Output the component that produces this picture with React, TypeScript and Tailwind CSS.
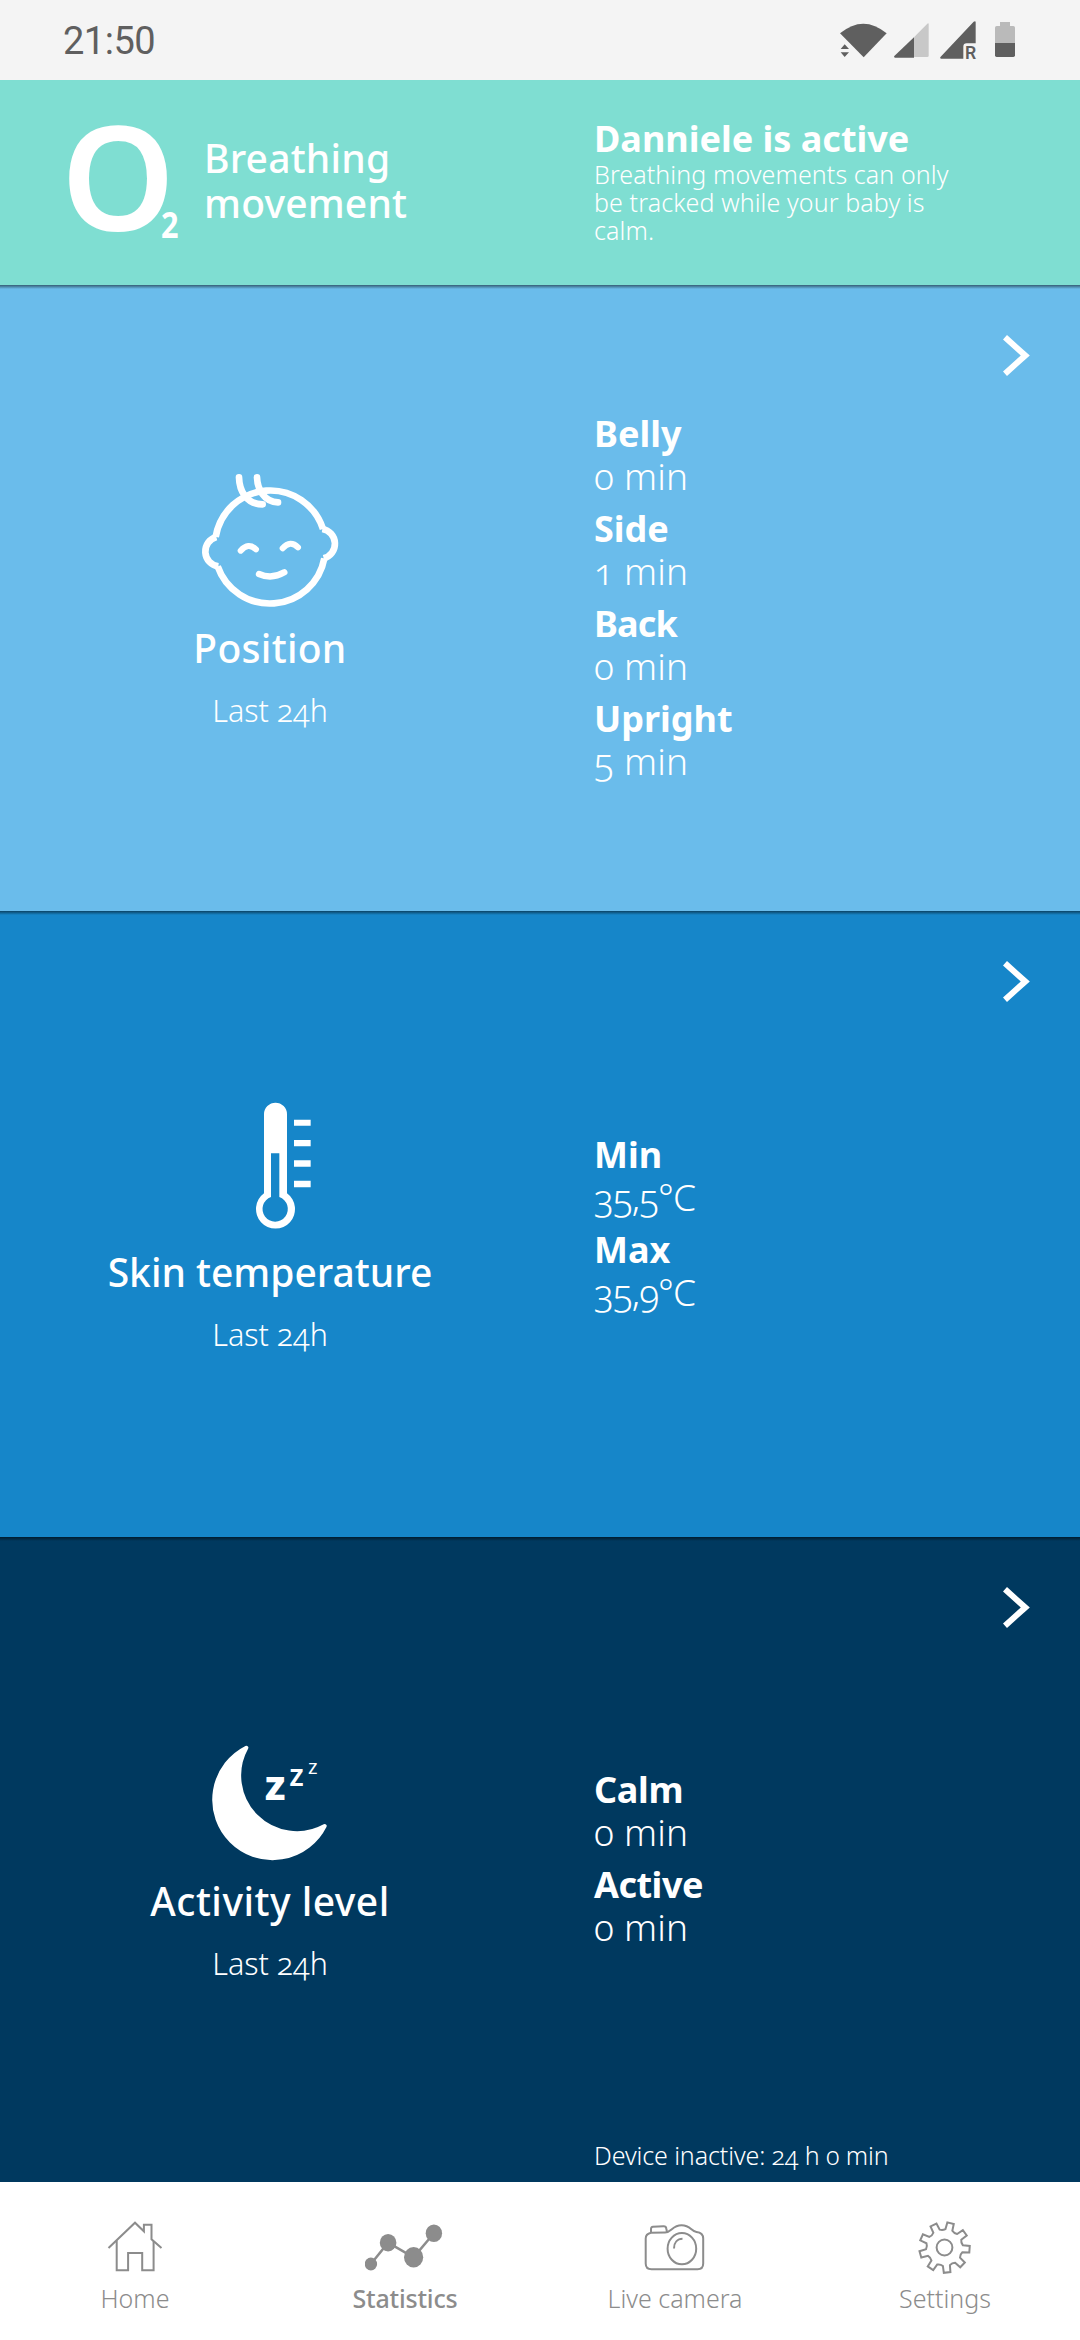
import React from "react";
import clsx from "clsx";

type Stat = { label: string; value: string; labelClass?: string; valueClass?: string };

const positionStats: Stat[] = [
	{ label: "Belly", value: "0 min" },
	{ label: "Side", value: "1 min" },
	{ label: "Back", value: "0 min", labelClass: "tracking-[-0.9px]" },
	{ label: "Upright", value: "5 min" },
];

const temperatureStats: Stat[] = [
	{ label: "Min", value: "35,5°C", valueClass: "tracking-[-1px]" },
	{ label: "Max", value: "35,9°C", valueClass: "tracking-[-1px]" },
];

const activityStats: Stat[] = [
	{ label: "Calm", value: "0 min", labelClass: "tracking-[-0.3px]" },
	{ label: "Active", value: "0 min", labelClass: "tracking-[-0.5px]" },
];

const StatusIcons = () => (
	<svg width="220" height="80" viewBox="0 0 660 240" fill="#5f5f5f">
		<path d="M60 100Q130 42 200 100L131 172Z" />
		<path d="M62 147h25L74 133ZM62 157h25L74 171Z" />
		<path d="M282 112L322 71Q326 67 326 73V167Q326 171 322 171H282Z" fill="#c8c8c8" />
		<path d="M282 112V173H225Q220 172 223 168Z" />
		<path d="M467 67V130H440Q430 130 430 140V176H364Q358 175 362 170L461 65Q467 61 467 67Z" />
		<text x="435" y="177" fontSize="53" fontWeight="600" fontFamily="Roboto, sans-serif">R</text>
		<path d="M540 66h30v12h10q5 0 5 5v47h-60V83q0-5 5-5h10Z" fill="#bababa" />
		<path d="M525 129h60v37q0 5-5 5h-50q-5 0-5-5Z" />
	</svg>
);

const BabyIcon = () => (
	<svg width="160" height="142" viewBox="120 86 480 426" fill="none" stroke="white" strokeWidth="20">
		<path d="M197 290A166 166 0 0 1 519 266" />
		<path d="M523 354A166 166 0 0 1 203 378" />
		<path d="M199 290A45 45 0 0 0 205 378" />
		<path d="M517 266A45 45 0 0 1 521 354" />
		<g strokeLinecap="round">
			<path d="M267 111C268 150 288 192 338 192" />
			<path d="M321 111C322 145 342 185 384 186" />
			<path d="M272 331Q295 305 318 327" strokeWidth="18" />
			<path d="M398 324Q421 298 444 321" strokeWidth="18" />
			<path d="M327 401Q365 418 403 396" strokeWidth="19" />
		</g>
	</svg>
);

const ThermometerIcon = () => (
	<svg width="160" height="138" viewBox="330 49 480 414" fill="white">
		<path d="M552 100.500A34.500 34.500 0 0 1 621 100.500V338A58.500 58.500 0 1 1 552 338Z" />
		<path d="M573 218H598V349A38 38 0 1 1 573 349Z" fill="#1686c9" />
		<path d="M642 117h50v18h-50ZM642 178h50v19h-50ZM642 239h50v19h-50ZM642 300h50v20h-50Z" />
	</svg>
);

const MoonIcon = () => (
	<svg width="160" height="125" viewBox="210 56 480 375" fill="white" fontFamily="Noto Sans, sans-serif">
		<path
			d="M379 82A175 175 0 1 0 614 317A173 173 0 0 1 379 82Z"
			stroke="white"
			strokeWidth="12"
			strokeLinejoin="round"
		/>
		<text x="434" y="240" fontSize="125" fontWeight="800">z</text>
		<text x="508" y="198" fontSize="90" fontWeight="600">z</text>
		<text x="564" y="162" fontSize="61" fontWeight="400">z</text>
	</svg>
);

const Chevron = () => (
	<svg width="27" height="41" viewBox="1328 44 81 123" className="absolute top-[50px] right-[50px]">
		<path d="M1334 51L1395 105.500L1334 160" fill="none" stroke="white" strokeWidth="18" />
	</svg>
);

const HomeIcon = () => (
	<svg width="80" height="60" fill="none" stroke="#8c8c8c" strokeWidth="2">
		<path d="M13.500 30L40 4.700L48.900 13.300V6.700H56.500V21.200L66.500 30" />
		<path d="M21.700 22.500V52.300H33.100V35H47.200V52.300H58.600V23" />
	</svg>
);

const StatisticsIcon = () => (
	<svg width="80" height="60" fill="#8c8c8c">
		<path d="M5.900 46L23.100 24.700L48.600 39.300L68.900 15.300" fill="none" stroke="#8c8c8c" strokeWidth="2.500" />
		<ellipse cx="5.900" cy="46" rx="6.200" ry="6.500" />
		<ellipse cx="23.100" cy="24.700" rx="8.300" ry="8.700" />
		<ellipse cx="48.600" cy="39.300" rx="9.600" ry="10.300" />
		<ellipse cx="68.900" cy="15.300" rx="8.200" ry="8.800" />
	</svg>
);

const CameraIcon = () => (
	<svg width="80" height="60" fill="none" stroke="#8c8c8c" strokeWidth="2">
		<path d="M16 14.800L30 14.500C37 14.500 37 7.300 46.500 7.300C56 7.300 55.500 13.300 61.500 14C65.500 14.500 68.200 16.500 68.200 20.500V45.500Q68.200 51.300 62.500 51.300H16.500Q10.700 51.300 10.700 45.500V20.500Q10.700 16 16 14.800Z" />
		<path d="M16 14.800V11Q16 9 18 8.800L28.500 8.300Q31 8.200 31.300 10.500L32 14" />
		<ellipse cx="46.900" cy="30.700" rx="14.300" ry="15.600" />
		<path d="M39 30.500C39 24.500 42.500 20.800 47.500 20.800" />
	</svg>
);

// Nine teeth, 40 degrees apart
const gearPath = () => {
	const point = (radius: number, degrees: number) => {
		const a = (degrees * Math.PI) / 180;
		return `${(39.5 + radius * Math.cos(a)).toFixed(2)} ${(29.5 + radius * Math.sin(a)).toFixed(2)}`;
	};
	let d = "";
	for (let i = 0; i < 9; i++) {
		const a = 4 + i * 40;
		d += `${i === 0 ? "M" : "L"}${point(18.5, a - 11)}L${point(25.3, a - 7.5)}L${point(25.3, a + 7.5)}L${point(18.5, a + 11)}`;
		d += `Q${point(17, a + 20)} ${point(18.5, a + 29)}`;
	}
	return d + "Z";
};

const SettingsIcon = () => (
	<svg width="80" height="60" fill="none" stroke="#8c8c8c" strokeWidth="2">
		<path d={gearPath()} />
		<circle cx="39.500" cy="29.500" r="7.900" />
	</svg>
);

type PanelProps = {
	title: string;
	icon: React.ReactNode;
	stats: Stat[];
	className: string;
	titleClass?: string;
	note?: string;
};

const Panel = ({ title, icon, stats, className, titleClass, note }: PanelProps) => (
	<section
		className={clsx(
			"relative flex bg-linear-to-b from-black/50 to-transparent bg-[length:100%_4px] bg-no-repeat",
			className
		)}
	>
		<div className="flex w-[540px] flex-col items-center justify-center pt-[2px]">
			{icon}
			<h2 className={clsx("mt-3 text-[39px] leading-[50px] font-medium", titleClass)}>{title}</h2>
			<p className="mt-[17px] text-[30.5px] leading-10 font-light">Last 24h</p>
		</div>
		<div className="flex flex-1 flex-col pl-[54px]">
			<div className="flex h-full shrink-0 flex-col justify-center gap-[11px]">
				{stats.map((stat) => (
					<div key={stat.label}>
						<p className={clsx("text-[36px] leading-[39px] font-bold", stat.labelClass)}>
							{stat.label}
						</p>
						<p className={clsx("text-[37px] leading-[45px] font-light", stat.valueClass ?? "tracking-[0.2px]")}>
							{stat.value}
						</p>
					</div>
				))}
			</div>
			{note && (
				<p className="-mt-[41px] text-[25px] leading-7 font-light tracking-[-0.1px]">{note}</p>
			)}
		</div>
		<Chevron />
	</section>
);

const navItems = [
	{ label: "Home", icon: <HomeIcon />, className: "font-light" },
	{ label: "Statistics", icon: <StatisticsIcon />, className: "font-medium tracking-[-0.2px]" },
	{ label: "Live camera", icon: <CameraIcon />, className: "font-light" },
	{ label: "Settings", icon: <SettingsIcon />, className: "font-light" },
];

export default function App() {
	return (
		<div className="flex h-[2340px] w-[1080px] flex-col overflow-hidden bg-white font-['Noto_Sans',sans-serif] text-white [font-variant-numeric:oldstyle-nums]">
			<div className="flex h-20 items-center justify-between bg-[#f4f4f4] pr-10 pl-[63px]">
				<span className="pt-[2px] font-[Roboto,sans-serif] text-[38px] tracking-[-0.5px] text-[#5f5f5f] [font-variant-numeric:lining-nums]">
					21:50
				</span>
				<StatusIcons />
			</div>

			<header className="flex h-[205px] bg-[#7fded2]">
				<div className="flex w-[594px] items-start pl-[61px] [font-variant-numeric:lining-nums]">
					<span className="mt-[22px] w-[100px] text-[145px] leading-[145px] font-semibold">O</span>
					<span className="mt-[127px] w-[43px] origin-left scale-x-85 text-[36px] leading-9 font-bold">2</span>
					<h1 className="mt-[55px] w-[240px] text-[39px] leading-[45px] font-medium tracking-[0.2px]">
						Breathing movement
					</h1>
				</div>
				<div className="w-[376px] pt-[39px]">
					<p className="text-[36px] leading-10 font-bold whitespace-nowrap">Danniele is active</p>
					<p className="mt-px text-[25px] leading-7 font-light tracking-[0.1px]">
						Breathing movements can only be tracked while your baby is calm.
					</p>
				</div>
			</header>

			<Panel
				title="Position"
				icon={<BabyIcon />}
				stats={positionStats}
				className="h-[626px] bg-[#6abceb]"
				titleClass="tracking-[0.3px]"
			/>
			<Panel
				title="Skin temperature"
				icon={<ThermometerIcon />}
				stats={temperatureStats}
				className="h-[626px] bg-[#1686c9]"
			/>
			<Panel
				title="Activity level"
				icon={<MoonIcon />}
				stats={activityStats}
				className="h-[645px] bg-[#00395f]"
				titleClass="tracking-[0.5px]"
				note="Device inactive: 24 h 0 min"
			/>

			<nav className="grid h-[158px] grid-cols-4 bg-white pt-9 text-[#8c8c8c]">
				{navItems.map((item) => (
					<div key={item.label} className="flex flex-col items-center">
						{item.icon}
						<span className={clsx("mt-[5px] text-[25px] leading-[30px]", item.className)}>
							{item.label}
						</span>
					</div>
				))}
			</nav>
		</div>
	);
}
